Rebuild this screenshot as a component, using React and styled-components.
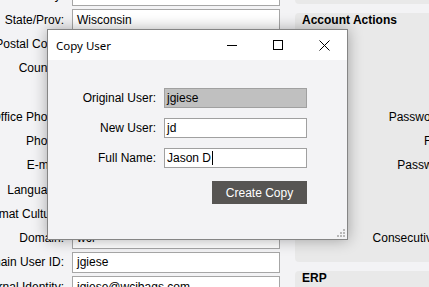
import React from 'react';
import styled, { createGlobalStyle } from 'styled-components';

const GlobalStyle = createGlobalStyle`
  html, body {
    margin: 0;
    padding: 0;
    overflow: hidden;
    background: #f3f3f5;
    font-family: 'Liberation Sans', Arial, sans-serif;
    font-size: 12px;
    color: #000;
  }
`;

const StPage = styled.div`
  position: relative;
  width: 429px;
  height: 287px;
  overflow: hidden;
`;

const StScroller = styled.div`
  display: grid;
  grid-template-columns: 295px 1fr;
  margin-top: -15.3px;
`;

// the form is scrolled: the label column starts left of the window
const StUserForm = styled.div`
  display: grid;
  grid-template-columns: 104px 208px;
  grid-auto-rows: 21px;
  column-gap: 8px;
  row-gap: 3.3px;
  margin-left: -40px;
`;

const StLabel = styled.div`
  display: flex;
  justify-content: flex-end;
  align-items: center;
  white-space: nowrap;
`;

const StField = styled.div`
  box-sizing: border-box;
  display: flex;
  align-items: center;
  padding: 0 4px;
  border: 1px solid #a6a6a6;
  background: #fff;
  white-space: nowrap;
  overflow: hidden;
`;

const StRightColumn = styled.div`
  display: flex;
  flex-direction: column;
  gap: 9px;
`;

const StPanel = styled.div`
  background: #e9e9e9;
  border-radius: 4px 0 0 4px;
  height: ${(p) => p.$height}px;
  overflow: hidden;
`;

const StPanelTitle = styled.div`
  padding: 0 7px;
  line-height: 14px;
  font-weight: bold;
`;

const StPanelRows = styled.div`
  display: grid;
  grid-template-columns: 193px 1fr;
  grid-auto-rows: 21px;
  row-gap: 3.2px;
  margin-top: 79.5px;
`;

/* dialog */
const StDialog = styled.div`
  position: absolute;
  left: 47px;
  top: 29px;
  width: 301px;
  height: 211px;
  box-sizing: border-box;
  border: 1px solid #858585;
  box-shadow: 0 0 14px rgba(0, 0, 0, 0.32);
  display: flex;
  flex-direction: column;
  background: #f3f3f5;
`;

const StTitleBar = styled.div`
  height: 30px;
  background: #fff;
  display: flex;
  align-items: center;
`;

const StTitle = styled.div`
  flex: 1;
  padding-left: 8px;
  font-family: 'Noto Sans', 'Open Sans', sans-serif;
  font-size: 11.5px;
  color: #000;
`;

const StWinButton = styled.div`
  width: 46px;
  height: 30px;
  display: flex;
  align-items: center;
  justify-content: center;
`;

const StDialogBody = styled.div`
  flex: 1;
  padding-top: 28px;
`;

const StDialogForm = styled.div`
  display: grid;
  grid-template-columns: 108px 143px;
  grid-auto-rows: 20px;
  column-gap: 8px;
  row-gap: 10px;
`;

const StDialogField = styled(StField)`
  padding: 0 2px;
  border-color: #a0a0a0;
  background: ${(p) => (p.$disabled ? '#c0c0c0' : '#fff')};
`;

const StCaret = styled.span`
  display: inline-block;
  width: 1px;
  height: 14px;
  background: #000;
  margin-left: 1px;
`;

const StButtonRow = styled.div`
  grid-column: 2;
  display: flex;
  justify-content: flex-end;
  margin-top: 3px;
`;

const StCopyButton = styled.button`
  width: 95px;
  height: 23px;
  border: none;
  background: #575553;
  color: #fff;
  font-family: 'Liberation Sans', Arial, sans-serif;
  font-size: 12px;
  padding: 0;
`;

const StGrip = styled.svg`
  position: absolute;
  right: 2px;
  bottom: 2px;
`;

const userRows = [
  ['City:', ''],
  ['State/Prov:', 'Wisconsin'],
  ['Postal Code:', ''],
  ['Country:', ''],
  ['', null],
  ['Office Phone:', ''],
  ['Phone:', ''],
  ['E-mail:', ''],
  ['Language:', ''],
  ['Format Culture:', ''],
  ['Domain:', 'wcf'],
  ['Domain User ID:', 'jgiese'],
  ['External Identity:', 'jgiese@wcibags.com'],
];

const actionRows = [
  'Password Expires:',
  'Force Sync:',
  'Password Reset:',
  'Locked:',
  'Disabled:',
  'Consecutive Failures:',
];

const App = () => {
  return (
    <StPage>
      <GlobalStyle />
      <StScroller>
        <StUserForm>
          {userRows.map(([label, value], i) => (
            <React.Fragment key={i}>
              <StLabel>{label}</StLabel>
              {value === null ? <div /> : <StField>{value}</StField>}
            </React.Fragment>
          ))}
        </StUserForm>
        <StRightColumn>
          <StPanel $height={19.3} />
          <StPanel $height={249}>
            <StPanelTitle>Account Actions</StPanelTitle>
            <StPanelRows>
              {actionRows.map((label) => (
                <React.Fragment key={label}>
                  <StLabel>{label}</StLabel>
                  <div />
                </React.Fragment>
              ))}
            </StPanelRows>
          </StPanel>
          <StPanel $height={40}>
            <StPanelTitle>ERP</StPanelTitle>
          </StPanel>
        </StRightColumn>
      </StScroller>

      <StDialog>
        <StTitleBar>
          <StTitle>Copy User</StTitle>
          <StWinButton>
            <svg width="10" height="10" viewBox="0 0 10 10">
              <path d="M0 5.5h10" stroke="#000" strokeWidth="1" />
            </svg>
          </StWinButton>
          <StWinButton>
            <svg width="10" height="10" viewBox="0 0 10 10">
              <rect x="0.5" y="0.5" width="9" height="9" fill="none" stroke="#000" strokeWidth="1" />
            </svg>
          </StWinButton>
          <StWinButton>
            <svg width="11" height="11" viewBox="0 0 11 11">
              <path d="M0.5 0.5l10 10M10.5 0.5l-10 10" stroke="#000" strokeWidth="1" />
            </svg>
          </StWinButton>
        </StTitleBar>
        <StDialogBody>
          <StDialogForm>
            <StLabel>Original User:</StLabel>
            <StDialogField $disabled>jgiese</StDialogField>
            <StLabel>New User:</StLabel>
            <StDialogField>jd</StDialogField>
            <StLabel>Full Name:</StLabel>
            <StDialogField>
              Jason D<StCaret />
            </StDialogField>
            <StButtonRow>
              <StCopyButton>Create Copy</StCopyButton>
            </StButtonRow>
          </StDialogForm>
        </StDialogBody>
        <StGrip width="8" height="8" viewBox="0 0 8 8">
          <rect x="6" y="0" width="2" height="2" fill="#b8b8b8" />
          <rect x="3" y="3" width="2" height="2" fill="#b8b8b8" />
          <rect x="6" y="3" width="2" height="2" fill="#b8b8b8" />
          <rect x="0" y="6" width="2" height="2" fill="#b8b8b8" />
          <rect x="3" y="6" width="2" height="2" fill="#b8b8b8" />
          <rect x="6" y="6" width="2" height="2" fill="#b8b8b8" />
        </StGrip>
      </StDialog>
    </StPage>
  );
};

export default App;
